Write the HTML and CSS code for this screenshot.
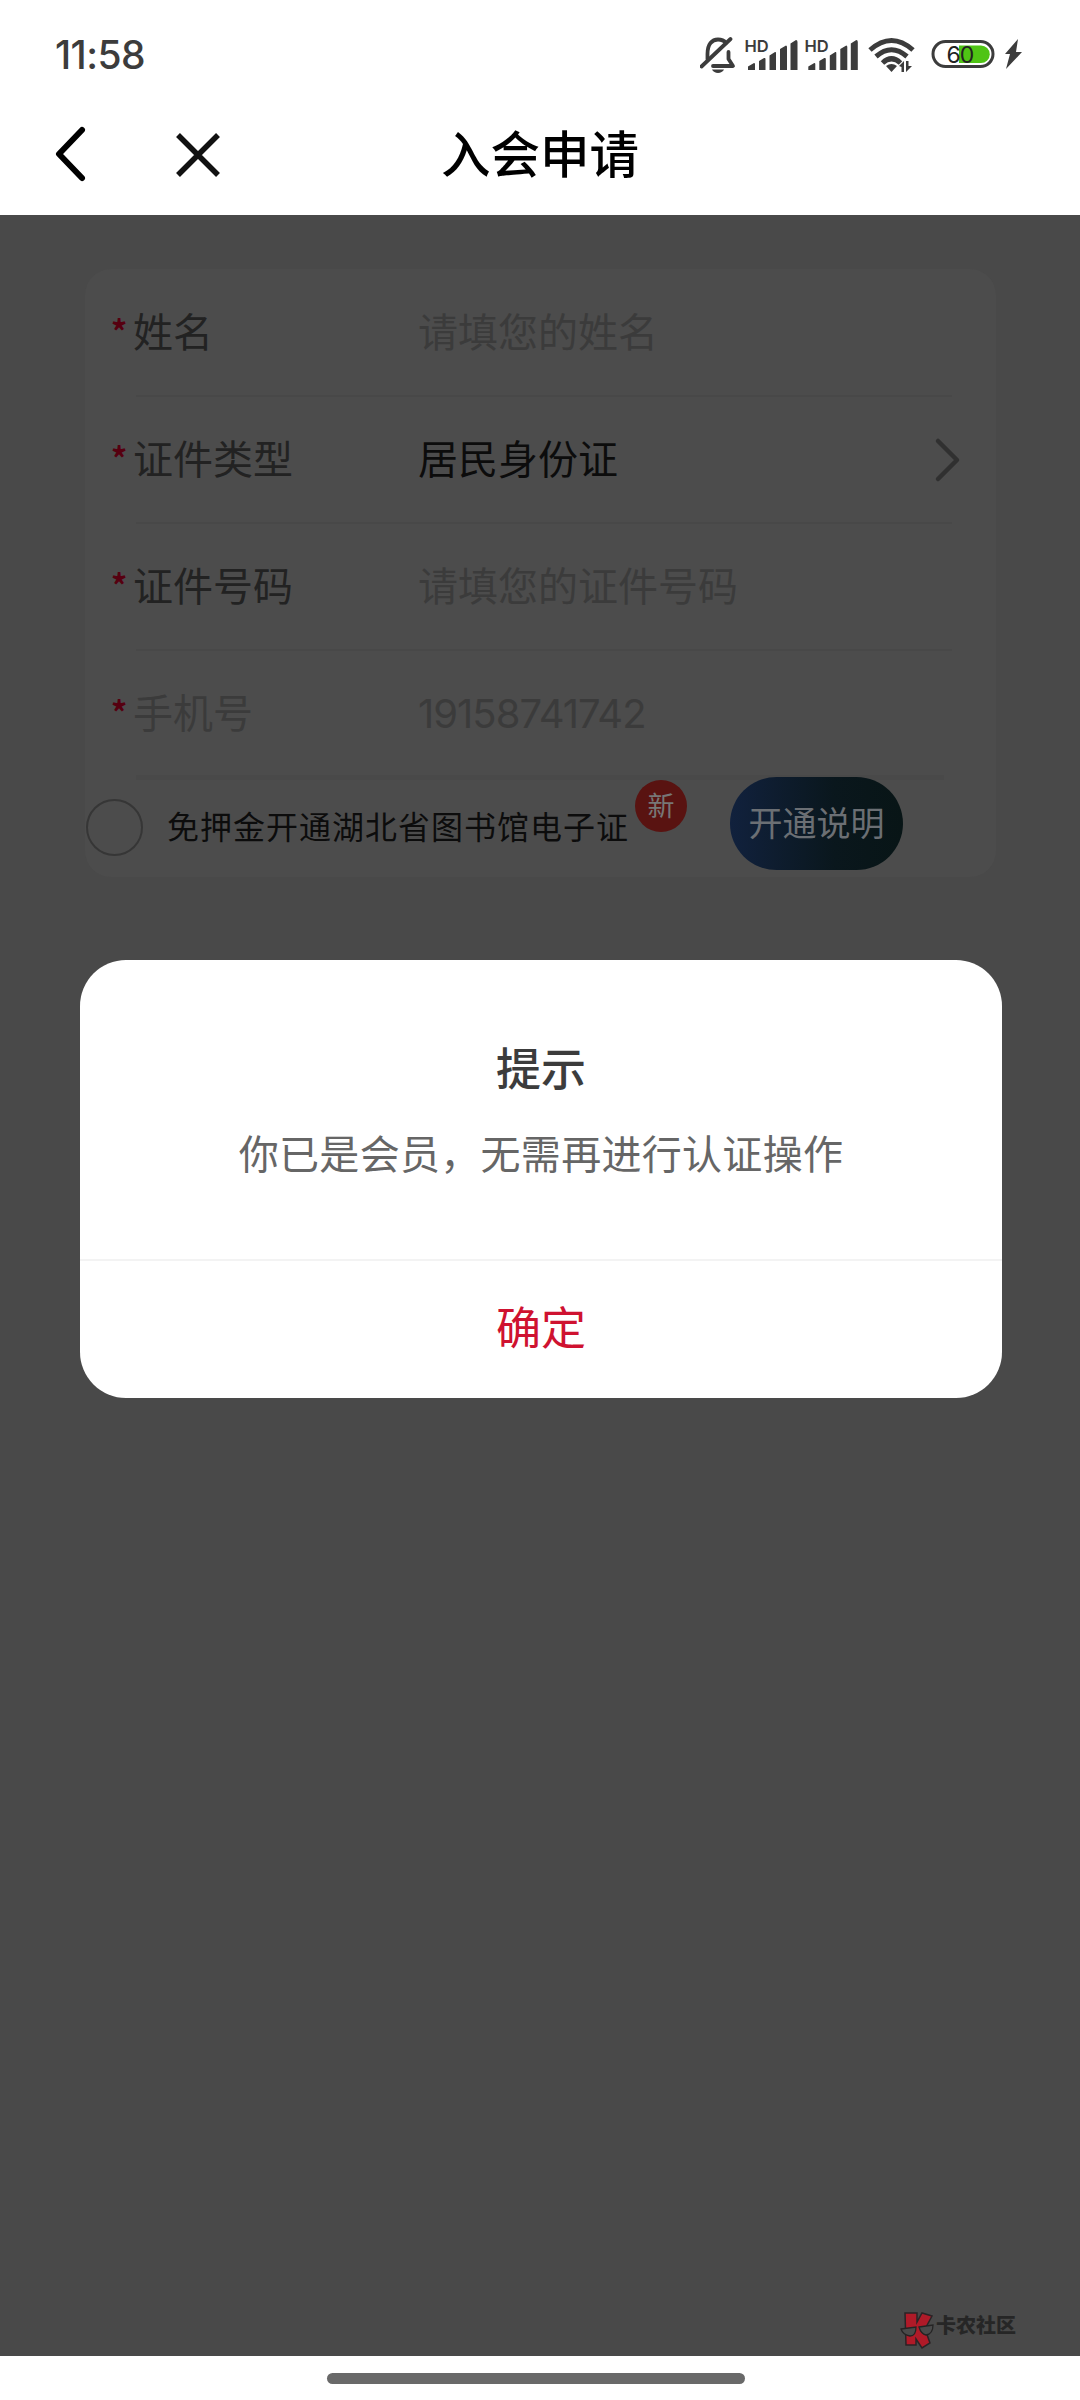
FILE: index.html
```html
<!DOCTYPE html>
<html lang="zh-CN">
<head>
<meta charset="utf-8">
<title>入会申请</title>
<link rel="stylesheet" href="styles.css">
</head>
<body>
<div class="screen">
  <header class="status">
    <span class="time">11:58</span>
    <svg class="status-icons" width="340" height="44" viewBox="0 0 340 44">
      <g fill="none" stroke="#3c3c3c" stroke-width="3.800" stroke-linecap="round" stroke-linejoin="round">
        <path d="M7.500 24V19C7.500 9 12 4.500 18 4.500C21.500 4.500 24 5.500 26 8"/>
        <path d="M28.500 17V24L33 31H13"/>
        <path d="M1.500 31.500L30.500 4"/>
      </g>
      <path d="M12 34.500H24C22 39 14 39 12 34.500Z" fill="#3c3c3c"/>
      <g fill="#3c3c3c">
        <path id="bars" d="M48 35V31.500L54 28Q55 28 55 29V35ZM59 35V26L64 23Q65.500 22.500 65.500 24V35ZM69.500 35V20.500L75 17Q76 16.500 76 18V35ZM80 35V14L86 10.500Q87 10.500 87 12V35ZM90.500 35V8.500L96 5Q97.500 5 97.500 7V35Z"/>
        <use href="#bars" x="60.300"/>
      </g>
      <text class="hd" x="44.500" y="16.500">HD</text>
      <text class="hd" x="104.500" y="16.500">HD</text>
      <g fill="none" stroke="#3c3c3c" stroke-width="5">
        <path d="M170 15Q191.500 -4 213 15"/>
        <path d="M176 21.500Q191.500 8 207 21.500"/>
        <path d="M182.500 28Q191.500 19.500 200.500 28"/>
      </g>
      <path d="M186 31Q191.500 27 197 31L191.500 37Z" fill="#3c3c3c"/>
      <path d="M199 31L204 26V37H201.500V32ZM206 26H208.500V31H212L206 37Z" fill="#3c3c3c"/>
      <rect x="233" y="6.500" width="60" height="25" rx="12.500" fill="#fff" stroke="#3c3c3c" stroke-width="3"/>
      <path d="M259 10.500H281A8.500 8.500 0 0 1 281 28H259Z" fill="#4fc414"/>
      <text class="pct" x="246.500" y="27.500">60</text>
      <path d="M318 4L305 19H310L306 34L322 17H316Z" fill="#3c3c3c"/>
    </svg>
  </header>
  <nav class="nav">
    <svg class="back" width="44" height="60" viewBox="0 0 44 60"><path d="M34 6L11 30L34 54" fill="none" stroke="#000" stroke-width="6" stroke-linecap="round" stroke-linejoin="round"/></svg>
    <svg class="close" width="50" height="50" viewBox="0 0 50 50"><path d="M5 5L45 45M45 5L5 45" stroke="#111" stroke-width="5.500"/></svg>
    <h1 class="nav-title">入会申请</h1>
  </nav>
  <main class="page">
    <section class="card">
      <div class="row"><i class="star">*</i><span class="label">姓名</span><span class="value hint">请填您的姓名</span></div>
      <div class="row"><i class="star">*</i><span class="label">证件类型</span><span class="value">居民身份证</span>
        <svg class="chev" width="28" height="48" viewBox="0 0 28 48"><path d="M4 5L23 24L4 43" fill="none" stroke="#303030" stroke-width="4.500" stroke-linecap="round" stroke-linejoin="round"/></svg></div>
      <div class="row"><i class="star">*</i><span class="label">证件号码</span><span class="value hint">请填您的证件号码</span></div>
      <div class="row last"><i class="star">*</i><span class="label hint">手机号</span><span class="value hint phone">19158741742</span></div>
      <div class="agree">
        <span class="radio"></span>
        <span class="agree-text">免押金开通湖北省图书馆电子证</span>
        <span class="badge">新</span>
        <span class="button">开通说明</span>
      </div>
    </section>
    <section class="dialog">
      <div class="dialog-body">
        <h2 class="dialog-title">提示</h2>
        <p class="dialog-text">你已是会员，无需再进行认证操作</p>
      </div>
      <div class="confirm">确定</div>
    </section>
    <div class="brand">
      <svg width="36" height="40" viewBox="0 0 36 40">
        <path d="M6 2H18V11L23 2L33 5L26 18L31 32L23 37L17 28V34L7 34Z" fill="#b01a28" stroke="#2b2326" stroke-width="1.500"/>
        <path d="M2 18L17 16Q17 25 11 25Q4 24 2 18ZM20 16L34 14Q34 23 27 24Q22 23 20 16Z" fill="#4a4a4a" stroke="#242424" stroke-width="1.300"/>
      </svg>
      <span class="brand-name">卡农社区</span>
    </div>
  </main>
  <footer class="home"><span class="pill"></span></footer>
</div>
</body>
</html>
```
FILE: styles.css
```css
* { box-sizing: border-box; }
body { margin: 0; font-family: "Noto Sans CJK SC", sans-serif; }
.screen { width: 1080px; height: 2400px; display: flex; flex-direction: column; background: #fff; }
.status { height: 94px; padding: 32px 40px 0 55px; display: flex; justify-content: space-between; align-items: flex-start; }
.status-icons { margin-top: 3px; }
.time { font: 500 39px/46px Inter, sans-serif; letter-spacing: -0.6px; color: #3c3c3c; }
.hd { font: 600 16.5px Inter, sans-serif; fill: #3c3c3c; }
.pct { font: 400 23px Inter, sans-serif; letter-spacing: -1px; fill: #222; }
.nav { height: 121px; padding-left: 48px; display: flex; align-items: center; position: relative; }
.back { margin-bottom: 1px; }
.close { margin-left: 81px; }
.nav-title { margin: 0; padding-bottom: 6px; position: absolute; left: 0; right: 0; text-align: center; font-size: 49.5px; line-height: 72px; font-weight: 500; color: #000; }
.page { height: 2141px; background: #494949; position: relative; padding: 54px 84px 0 85px; }
.card { height: 608px; border-radius: 26px; background: #4c4c4c; padding-left: 26px; }
.row { height: 127px; display: flex; align-items: center; position: relative; font-size: 40px; line-height: 58px; padding-right: 34px; }
.row::after { content: ""; position: absolute; left: 25px; right: 44px; bottom: -1px; height: 2px; background: #484848; }
.row.last::after { right: 52px; bottom: -3px; height: 5px; background: #494949; }
.star { width: 22px; padding-bottom: 6px; font: 700 32px/40px "Noto Sans CJK SC", sans-serif; color: #560010; }
.label { width: 285px; padding-bottom: 5px; color: #222; }
.value { color: #0c0c0c; flex: 1; padding-bottom: 5px; }
.label.hint, .value.hint { color: #3b3b3b; }
.value.phone { font-family: Inter, sans-serif; letter-spacing: -1px; padding-bottom: 0; }
.agree { height: 100px; display: flex; align-items: center; margin-left: -25px; position: relative; }
.radio { width: 57px; height: 57px; border: 2px solid #363636; border-radius: 50%; }
.agree-text { margin-left: 24px; padding-bottom: 5px; width: 467px; font-size: 32px; letter-spacing: 1px; line-height: 48px; color: #0c0c0c; white-space: nowrap; }
.badge { margin: 0 0 43px 1px; width: 52px; height: 52px; border-radius: 50%; background: #591311; color: #777; font-size: 27px; line-height: 50px; text-align: center; }
.button { margin: 0 0 8px 43px; width: 173px; height: 93px; border-radius: 47px; background: linear-gradient(90deg, #11213d, #0a171d 60%, #081516); color: #6b6f74; font-size: 34px; line-height: 90px; text-align: center; }
.dialog { position: absolute; left: 80px; top: 745px; width: 922px; height: 438px; border-radius: 46px; background: #fff; text-align: center; }
.dialog-body { height: 301px; padding-top: 74px; border-bottom: 2px solid #f3f3f3; }
.dialog-title { margin: 0; font-size: 45px; line-height: 66px; font-weight: 500; color: #3c3c3c; }
.dialog-text { margin: 23px 0 0; font-size: 40px; letter-spacing: .3px; line-height: 58px; color: #666; }
.confirm { font-size: 45px; line-height: 130px; color: #cf1230; }
.brand { position: absolute; left: 899px; top: 2096px; display: flex; }
.brand-name { margin-left: 1px; font-size: 20px; font-weight: 900; line-height: 28px; color: #262626; }
.home { height: 44px; display: flex; justify-content: center; padding-top: 17px; margin-left: -8px; }
.pill { width: 418px; height: 11px; border-radius: 6px; background: #696969; }
```
